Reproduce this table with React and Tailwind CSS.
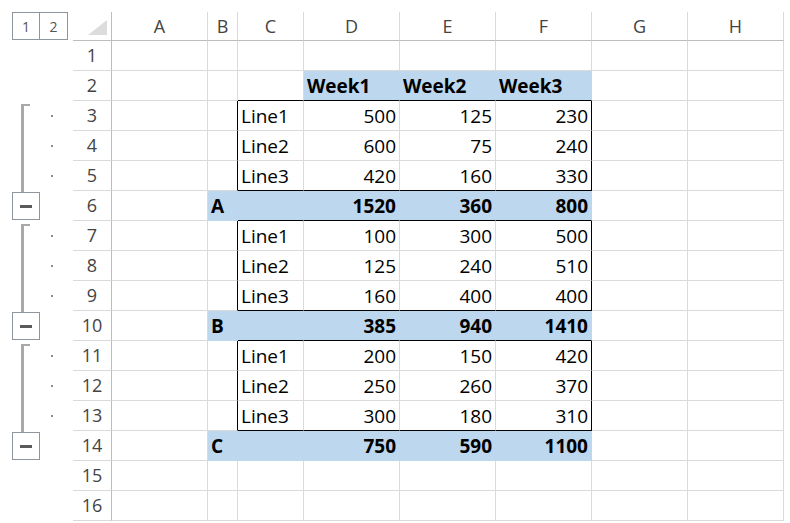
import React from "react";

const COLS = ["A", "B", "C", "D", "E", "F", "G", "H"];

const DATA = {
  2: { D: "Week1", E: "Week2", F: "Week3" },
  3: { C: "Line1", D: "500", E: "125", F: "230" },
  4: { C: "Line2", D: "600", E: "75", F: "240" },
  5: { C: "Line3", D: "420", E: "160", F: "330" },
  6: { B: "A", D: "1520", E: "360", F: "800" },
  7: { C: "Line1", D: "100", E: "300", F: "500" },
  8: { C: "Line2", D: "125", E: "240", F: "510" },
  9: { C: "Line3", D: "160", E: "400", F: "400" },
  10: { B: "B", D: "385", E: "940", F: "1410" },
  11: { C: "Line1", D: "200", E: "150", F: "420" },
  12: { C: "Line2", D: "250", E: "260", F: "370" },
  13: { C: "Line3", D: "300", E: "180", F: "310" },
  14: { B: "C", D: "750", E: "590", F: "1100" },
};

const SUM_ROWS = [6, 10, 14];
const BLOCK_ROWS = [3, 4, 5, 7, 8, 9, 11, 12, 13];
const BLOCK_BOTTOM = [2, 5, 6, 9, 10, 13];

function isBlue(r, c) {
  if (r === 2) return ["D", "E", "F"].includes(c);
  if (SUM_ROWS.includes(r)) return ["B", "C", "D", "E", "F"].includes(c);
  return false;
}

function Cell({ r, c }) {
  const blue = isBlue(r, c);
  const inBlock = BLOCK_ROWS.includes(r);
  const ci = COLS.indexOf(c);
  const nextBlue = isBlue(r, COLS[ci + 1]);

  let right = "border-r-[#dadada]";
  if (inBlock && (c === "B" || c === "F")) right = "border-r-black";
  else if (blue && (nextBlue || c === "F")) right = "border-r-[#bdd7ee]";

  let bottom = "border-b-[#dadada]";
  if (BLOCK_BOTTOM.includes(r) && ["C", "D", "E", "F"].includes(c)) bottom = "border-b-black";
  else if (blue) bottom = "border-b-[#bdd7ee]";

  const text = DATA[r] && DATA[r][c];
  const bold = r === 2 || SUM_ROWS.includes(r);
  const numeric = text && /^\d+$/.test(text);

  return (
    <div
      className={
        "border-r border-b flex items-center pt-[2px] text-[19px] text-black " +
        right + " " + bottom + " " +
        (blue ? "bg-[#bdd7ee] " : "bg-white ") +
        (bold ? "font-bold " : "") +
        (numeric ? "justify-end pr-[3px]" : "justify-start pl-[3px]")
      }
    >
      {text}
    </div>
  );
}

function Outline({ r }) {
  const start = [3, 7, 11].includes(r);
  const mid = [4, 5, 8, 9, 12, 13].includes(r);
  const minus = SUM_ROWS.includes(r);
  if (start) {
    return (
      <div className="flex items-stretch">
        <div className="ml-[21px] mt-[3px] w-[9px] border-l-[3px] border-t-[2px] border-[#a9a9a9]" />
        <div className="ml-[21px] self-center w-[2px] h-[2px] bg-[#8a8a8a]" />
      </div>
    );
  }
  if (mid) {
    return (
      <div className="flex items-stretch">
        <div className="ml-[21px] w-[9px] border-l-[3px] border-[#a9a9a9]" />
        <div className="ml-[21px] self-center w-[2px] h-[2px] bg-[#8a8a8a]" />
      </div>
    );
  }
  if (minus) {
    return (
      <div className="flex flex-col">
        <div className="ml-[21px] h-[1px] w-[3px] bg-[#a9a9a9]" />
        <div className="ml-[12px] w-[28px] h-[28px] border border-[#8f969e] flex items-center justify-center bg-white">
          <div className="w-[12px] h-[3px] bg-[#5a5a5a]" />
        </div>
      </div>
    );
  }
  return <div />;
}

export default function App() {
  const rows = Array.from({ length: 16 }, (_, i) => i + 1);
  return (
    <div className="w-[790px] h-[523px] bg-white overflow-hidden font-['Open_Sans',sans-serif]">
      <div className="mt-[12px] grid grid-cols-[73px_39px_96px_30px_66px_96px_96px_96px_96px_96px] grid-rows-[29px_repeat(16,30px)]">
        {/* top-left outline level buttons */}
        <div className="flex items-start">
          <div className="ml-[12px] flex border border-[#8f969e] h-[28px]">
            <div className="w-[27px] flex items-center justify-center border-r border-[#8f969e] text-[14px] text-[#555]">1</div>
            <div className="w-[27px] flex items-center justify-center text-[14px] text-[#555]">2</div>
          </div>
        </div>
        {/* corner */}
        <div className="border-r border-b border-[#bdbdbd] flex justify-end items-end pr-[4px] pb-[5px]">
          <svg width="19" height="15" viewBox="0 0 19 15">
            <polygon points="0,15 19,15 19,0" fill="#dcdcdc" />
          </svg>
        </div>
        {COLS.map((c) => (
          <div
            key={c}
            className="border-r border-r-[#dadada] border-b border-b-[#bdbdbd] flex items-center justify-center text-[18px] text-[#444]"
          >
            {c}
          </div>
        ))}
        {rows.map((r) => (
          <React.Fragment key={r}>
            <Outline r={r} />
            <div className="border-r border-r-[#bdbdbd] border-b border-b-[#dadada] flex items-center justify-center text-[18px] text-[#444]">
              {r}
            </div>
            {COLS.map((c) => (
              <Cell key={c} r={r} c={c} />
            ))}
          </React.Fragment>
        ))}
      </div>
    </div>
  );
}
